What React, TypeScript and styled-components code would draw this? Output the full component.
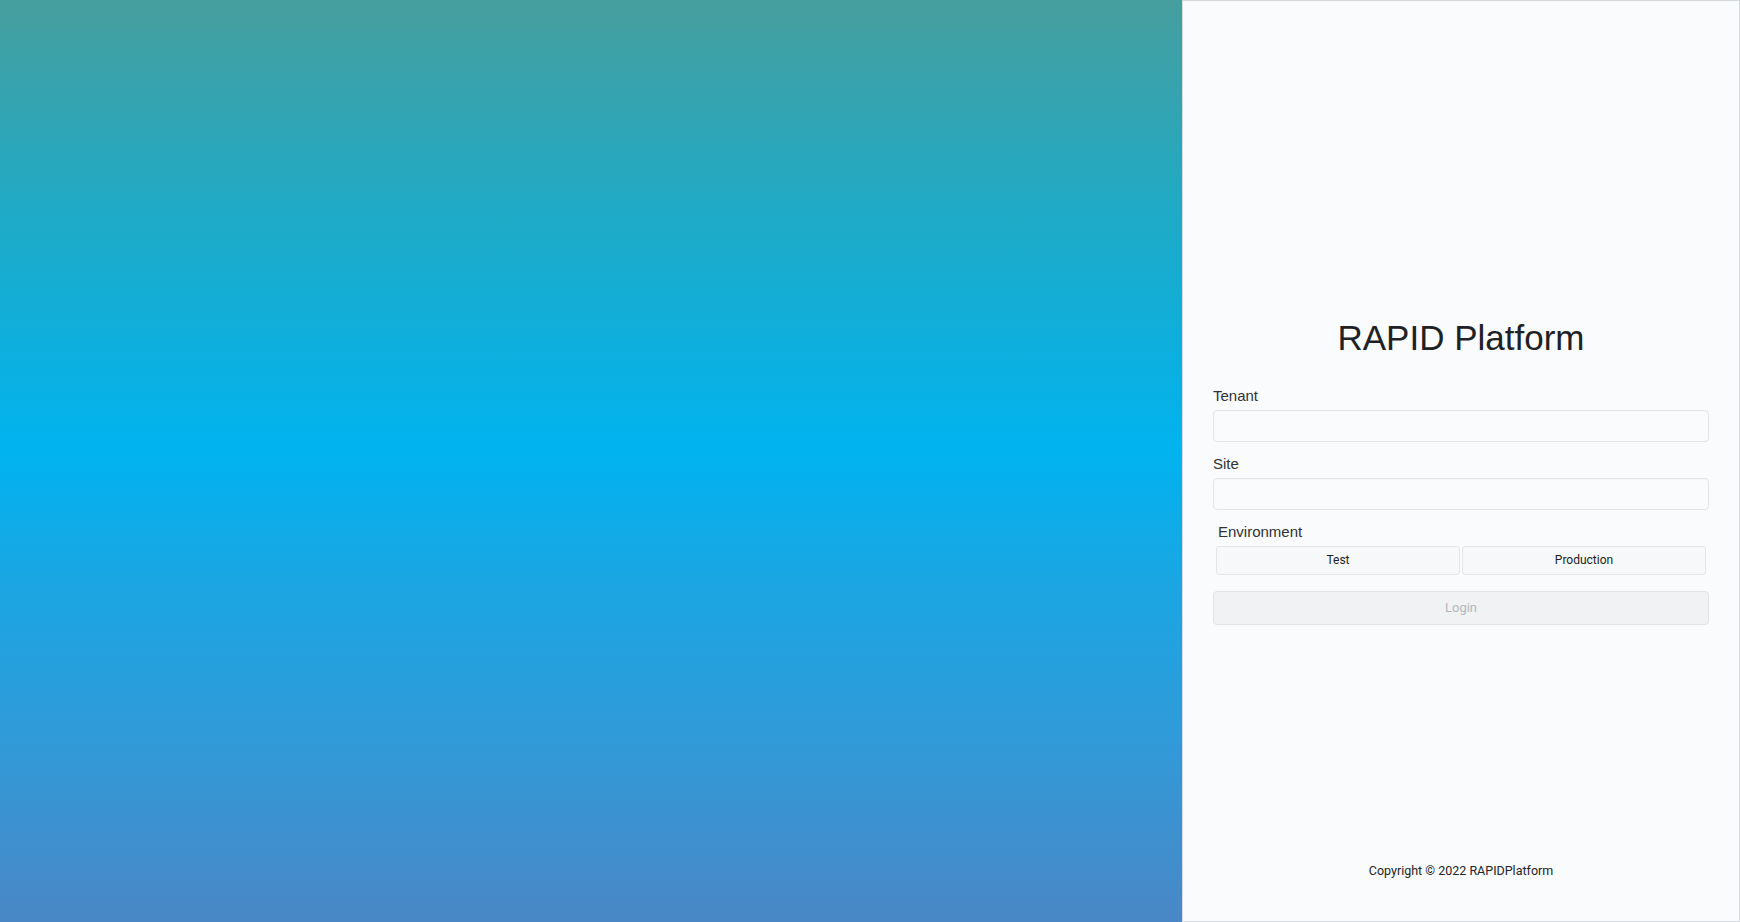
import React from "react";
import styled, { createGlobalStyle } from "styled-components";

const GlobalStyle = createGlobalStyle`
  html, body {
    margin: 0;
    padding: 0;
    height: 100%;
  }
  body {
    font-family: "Liberation Sans", Arial, sans-serif;
    overflow: hidden;
  }
  #root {
    height: 100%;
  }
  * {
    box-sizing: border-box;
  }
`;

const Page = styled.div`
  display: flex;
  width: 1740px;
  height: 922px;
`;

const Hero = styled.div`
  width: 1182px;
  flex: none;
  background: linear-gradient(
    to bottom,
    #469e9d 0%,
    #1faac6 23%,
    #00b3ef 49%,
    #1aa6e3 63%,
    #2f9bd9 79%,
    #4a87c6 100%
  );
`;

const Panel = styled.div`
  flex: 1;
  display: flex;
  flex-direction: column;
  background: #fafbfd;
  border: 1px solid #d5d8dc;
`;

const Main = styled.main`
  flex: 1;
  display: flex;
  flex-direction: column;
  justify-content: center;
  padding: 78px 30px 0 30px;
`;

const Title = styled.h1`
  margin: 0 0 29px;
  font-family: "Liberation Sans", Arial, sans-serif;
  font-weight: 400;
  font-size: 35px;
  line-height: 40px;
  text-align: center;
  color: #1e2225;
`;

const Field = styled.div`
  display: flex;
  flex-direction: column;
  gap: 5px;
  margin-bottom: 13px;
`;

const Label = styled.label<{ $inset?: number }>`
  font-family: "Liberation Sans", Arial, sans-serif;
  font-size: 15px;
  line-height: 18px;
  color: #2f3235;
  padding-left: ${(p) => p.$inset ?? 0}px;
`;

const Input = styled.input`
  height: 32px;
  width: 100%;
  border: 1px solid #e2e4e7;
  border-radius: 4px;
  background: #fafbfc;
  box-shadow: inset 0 1px 1px rgba(0, 0, 0, 0.02);
  padding: 0 10px;
  font-size: 14px;
  outline: none;
`;

const Toggle = styled.div`
  display: grid;
  grid-template-columns: 1fr 1fr;
  gap: 2px;
  margin: 0 3px;
`;

const ToggleButton = styled.button`
  height: 29px;
  border: 1px solid #e3e5e8;
  border-radius: 3px;
  background: #f7f8f9;
  font-family: Roboto, "Liberation Sans", sans-serif;
  font-size: 12px;
  font-weight: 400;
  color: #1a1d20;
  cursor: pointer;
  padding: 0;
`;

const LoginButton = styled.button`
  margin-top: 3px;
  height: 34px;
  width: 100%;
  border: 1px solid #e1e3e6;
  border-radius: 4px;
  background: #f1f2f4;
  font-family: Roboto, "Liberation Sans", sans-serif;
  font-size: 13px;
  color: #b4b7bb;
  padding: 0;
`;

const Footer = styled.footer`
  padding: 0 0 43px;
  text-align: center;
  font-family: Roboto, "Liberation Sans", sans-serif;
  font-size: 12.5px;
  line-height: 15px;
  color: #222528;
`;

export default function App() {
  return (
    <>
      <GlobalStyle />
      <Page>
        <Hero />
        <Panel>
          <Main>
            <Title>RAPID Platform</Title>
            <Field>
              <Label htmlFor="tenant">Tenant</Label>
              <Input id="tenant" />
            </Field>
            <Field>
              <Label htmlFor="site">Site</Label>
              <Input id="site" />
            </Field>
            <Field>
              <Label $inset={5}>Environment</Label>
              <Toggle>
                <ToggleButton>Test</ToggleButton>
                <ToggleButton>Production</ToggleButton>
              </Toggle>
            </Field>
            <LoginButton disabled>Login</LoginButton>
          </Main>
          <Footer>Copyright © 2022 RAPIDPlatform</Footer>
        </Panel>
      </Page>
    </>
  );
}
